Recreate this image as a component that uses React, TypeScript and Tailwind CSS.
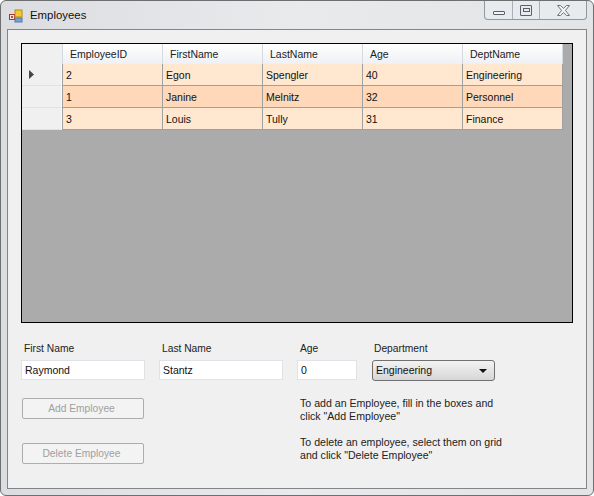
const rows = [
  { id: "2", first: "Egon", last: "Spengler", age: "40", dept: "Engineering", bg: "bg-[#ffe8cf]" },
  { id: "1", first: "Janine", last: "Melnitz", age: "32", dept: "Personnel", bg: "bg-[#fed8b8]" },
  { id: "3", first: "Louis", last: "Tully", age: "31", dept: "Finance", bg: "bg-[#ffe8cf]" },
];

const columns = ["EmployeeID", "FirstName", "LastName", "Age", "DeptName"];

function Header({ title }: { title: string }) {
  return (
    <div className="w-[100px] h-[20px] pl-[7px] pt-[1px] flex items-center border-r border-[#d5d9e0] bg-gradient-to-b from-white to-[#eef0f4] text-[10.5px] text-[#222]">
      {title}
    </div>
  );
}

function Cell({ text }: { text: string }) {
  return (
    <div className="w-[100px] h-full pl-[3px] pt-[2px] flex items-center border-r border-[#a0a0a0] text-[10.5px] text-[#111]">
      {text}
    </div>
  );
}

function Field({ label, value, width, mr }: { label: string; value: string; width: string; mr: string }) {
  return (
    <div className={`flex flex-col ${width} ${mr}`}>
      <div className="h-[18px] pl-[3px] text-[10.25px] leading-[13px] text-[#222]">{label}</div>
      <div className="h-[20px] pl-[3px] pt-[1px] flex items-center bg-white border border-[#dfe2e7] text-[10.5px] text-[#111]">{value}</div>
    </div>
  );
}

function DisabledButton({ label }: { label: string }) {
  return (
    <div className="w-[122px] h-[21px] pr-[3px] flex items-center justify-center rounded-[2px] border border-[#adadad] bg-[#f3f3f3] text-[10.25px] text-[#a0a0a0]">
      {label}
    </div>
  );
}

export default function App() {
  return (
    <div className="w-[594px] h-[496px] overflow-hidden flex flex-col bg-gradient-to-r from-[#dcdde0] via-[#e9eaec] to-[#e2e4e6] border border-[#6c6e70] rounded-[6px] [font-family:'Liberation_Sans',Arial,sans-serif]">
      <div className="h-[28px] flex justify-between items-start pl-[8px] pr-[6px]">
        <div className="flex items-center h-[28px] pt-[1px]">
          <svg width="15" height="14" viewBox="0 0 15 14">
            <rect x="0.5" y="5.5" width="5" height="5" fill="#e9e9e9" stroke="#b03030" />
            <rect x="2" y="7" width="2" height="2" fill="#d04040" />
            <rect x="6" y="1" width="7" height="7" fill="#f5c830" stroke="#b58a20" />
            <rect x="6" y="9" width="7" height="4" fill="#7b9fd0" stroke="#5a76a8" />
          </svg>
          <div className="ml-[6px] text-[11.4px] text-[#111]">Employees</div>
        </div>
        <div className="w-[103px] h-[19px] flex border border-t-0 border-[#8f98a3] rounded-b-[4px] bg-[#e8ebee]">
          <div className="w-[28px] flex items-center justify-center border-r border-[#a9b0b8]">
            <div className="w-[12px] h-[4px] mt-[6px] border border-[#57606b] bg-[#f4f4f4] rounded-[1px]" />
          </div>
          <div className="w-[27px] flex items-center justify-center border-r border-[#a9b0b8]">
            <div className="w-[12px] h-[11px] border border-[#57606b] rounded-[1px] flex items-center justify-center">
              <div className="w-[7px] h-[4px] border border-[#57606b]" />
            </div>
          </div>
          <div className="flex-1 flex items-center justify-center">
            <svg width="13" height="11" viewBox="0 0 13 11" fill="#f2f4f6">
              <path d="M.5.5h3l3 2.8L9.5.5h3L8.4 5.5l4.1 5h-3l-3-2.9-3 2.9h-3l4.1-5z" stroke="#6b7580" strokeWidth="1" />
            </svg>
          </div>
        </div>
      </div>

      <div className="w-[580px] h-[460px] ml-[6px] flex flex-col bg-[#f0f0f0] border border-[#858585] pt-[13px] pl-[13px]">
        <div className="w-[552px] h-[280px] bg-[#ababab] border border-black">
          <div className="flex h-[20px]">
            <div className="w-[41px] h-full border-r border-[#d5d9e0] bg-[#f0f0f0]" />
            {columns.map((c) => (
              <Header key={c} title={c} />
            ))}
          </div>
          {rows.map((r, i) => (
            <div key={r.id} className="flex h-[22px]">
              <div className="w-[40px] h-full flex items-center pl-[7px] bg-[#f0f0f0] border-r border-[#fcfcfc] border-b border-b-[#e2e2e2]">
                {i === 0 && (
                  <svg width="6" height="9" viewBox="0 0 6 9">
                    <path d="M0 0l5 4.5L0 9z" fill="#444" />
                  </svg>
                )}
              </div>
              <div className={`flex h-full border-b border-l border-[#a0a0a0] ${r.bg}`}>
                <Cell text={r.id} />
                <Cell text={r.first} />
                <Cell text={r.last} />
                <Cell text={r.age} />
                <Cell text={r.dept} />
              </div>
            </div>
          ))}
        </div>

        <div className="flex mt-[19px]">
          <Field label="First Name" value="Raymond" width="w-[124px]" mr="mr-[14px]" />
          <Field label="Last Name" value="Stantz" width="w-[124px]" mr="mr-[14px]" />
          <Field label="Age" value="0" width="w-[60px]" mr="mr-[15px]" />
          <div className="flex flex-col w-[123px]">
            <div className="h-[18px] pl-[2px] text-[10.25px] leading-[13px] text-[#222]">Department</div>
            <div className="h-[21px] flex items-center justify-between pl-[3px] pr-[7px] pt-[1px] rounded-[3px] border border-[#707070] bg-gradient-to-b from-[#f3f3f3] to-[#d6d6d6] text-[10.5px] text-[#111]">
              Engineering
              <svg width="8" height="4" viewBox="0 0 8 4">
                <path d="M0 0h8L4 4z" fill="#111" />
              </svg>
            </div>
          </div>
        </div>

        <div className="flex mt-[16px]">
          <div className="w-[279px] pl-[1px] pt-[1px] flex flex-col gap-[24px]">
            <DisabledButton label="Add Employee" />
            <DisabledButton label="Delete Employee" />
          </div>
          <div className="flex flex-col text-[10.6px] leading-[13px] text-[#222]">
            <div>To add an Employee, fill in the boxes and<br />click "Add Employee"</div>
            <div className="mt-[13px]">To delete an employee, select them on grid<br />and click "Delete Employee"</div>
          </div>
        </div>
      </div>
    </div>
  );
}
